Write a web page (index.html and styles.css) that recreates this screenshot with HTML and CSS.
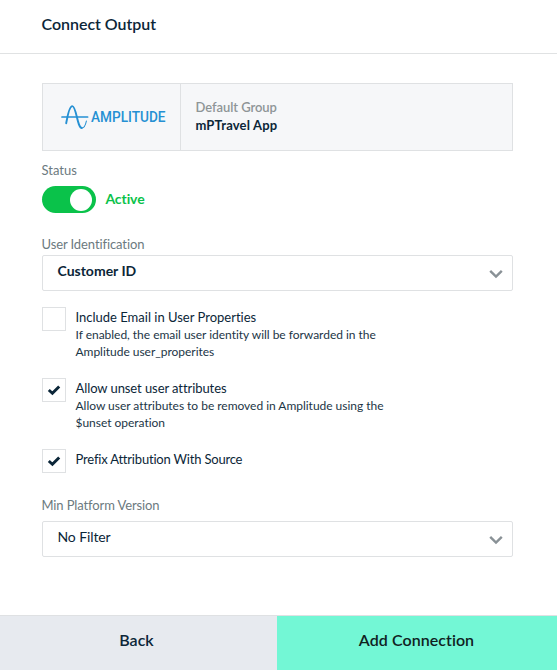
FILE: index.html
```html
<!DOCTYPE html>
<html lang="en">
<head>
<meta charset="utf-8">
<title>Connect Output</title>
<link rel="stylesheet" href="styles.css">
</head>
<body>
<div class="modal">
  <header class="header"><h1 class="title">Connect Output</h1></header>
  <main class="content">
    <section class="card">
      <div class="card-logo">
        <svg width="110" height="26" viewBox="0 0 110 26" role="img" aria-label="Amplitude">
          <g fill="none" stroke="#2590d3" stroke-linecap="round" stroke-linejoin="round">
            <path stroke-width="1.7" d="M1 13H26.6"/>
            <path stroke-width="1.9" d="M5.2 19.2C6.4 13 8 2.1 11.3 2.1C15.4 2.1 16.2 24 20.8 24"/>
            <path stroke-width="1.1" d="M20.8 24C23.6 24 24.6 20.8 25.4 17"/>
          </g>
          <text class="logo-text" x="30" y="17.9" textLength="74.5" lengthAdjust="spacingAndGlyphs">AMPLITUDE</text>
        </svg>
      </div>
      <div class="card-info">
        <div class="card-group">Default Group</div>
        <div class="card-name">mPTravel App</div>
      </div>
    </section>

    <div class="label status-label">Status</div>
    <div class="status">
      <span class="toggle"><span class="knob"></span></span>
      <span class="status-text">Active</span>
    </div>

    <div class="label user-label">User Identification</div>
    <div class="select">
      <span class="value strong">Customer ID</span>
      <svg class="chevron" width="14" height="10" viewBox="0 0 14 10"><path d="M1.2 1.8L7 7.6L12.8 1.8"/></svg>
    </div>

    <div class="options">
      <div class="option">
        <span class="box"></span>
        <div>
          <div class="option-title">Include Email in User Properties</div>
          <div class="option-help">If enabled, the email user identity will be forwarded in the<br>Amplitude user_properites</div>
        </div>
      </div>
      <div class="option">
        <span class="box"><svg width="14" height="12" viewBox="0 0 14 12"><path d="M1.8 6L5.4 9.3L12.2 2.4"/></svg></span>
        <div>
          <div class="option-title snug">Allow unset user attributes</div>
          <div class="option-help">Allow user attributes to be removed in Amplitude using the<br>$unset operation</div>
        </div>
      </div>
      <div class="option">
        <span class="box"><svg width="14" height="12" viewBox="0 0 14 12"><path d="M1.8 6L5.4 9.3L12.2 2.4"/></svg></span>
        <div class="option-title tight">Prefix Attribution With Source</div>
      </div>
    </div>

    <div class="label platform-label">Min Platform Version</div>
    <div class="select">
      <span class="value">No Filter</span>
      <svg class="chevron" width="14" height="10" viewBox="0 0 14 10"><path d="M1.2 1.8L7 7.6L12.8 1.8"/></svg>
    </div>
  </main>
  <footer class="footer">
    <div class="button back">Back</div>
    <div class="button add">Add Connection</div>
  </footer>
</div>
</body>
</html>
```
FILE: styles.css
```css
* { box-sizing: border-box; }
body {
  margin: 0;
  background: #fff;
  color: #0b2638;
  font: 400 13px/18px Lato, "Liberation Sans", sans-serif;
  font-variant-ligatures: none;
}
.modal { display: flex; flex-direction: column; width: 557px; height: 670px; }
.header { height: 54px; padding: 13px 41.5px 0; border-bottom: 1px solid #e0e2e3; }
.title { margin: 0; font-size: 16px; line-height: 22px; font-weight: 600; letter-spacing: -.03px; }
.content { flex: 1; padding: 29px 44px 0 42px; }

.card { display: flex; height: 68px; border: 1px solid #dfe1e3; background: #f6f7f9; }
.card-logo { width: 138px; padding: 20px 0 0 18px; border-right: 1px solid #dfe1e3; }
.card-logo svg { display: block; }
.logo-text { font: 500 14.5px Roboto, sans-serif; fill: #2590d3; }
.card-info { padding: 14px 0 0 14.4px; }
.card-group { color: #8e9597; font-weight: 600; letter-spacing: -.05px; }
.card-name { font-weight: 700; letter-spacing: .18px; }

.label { color: #6c7a80; margin-left: -.5px; }
.status-label { margin-top: 10px; }
.status { display: flex; align-items: center; height: 27px; margin-top: 7px; }
.toggle { display: flex; justify-content: flex-end; width: 54px; height: 27px; padding: 2.5px 4px; border-radius: 14px; background: #0ac24a; }
.knob { width: 22px; height: 22px; border-radius: 50%; background: #fff; }
.status-text { margin: -2px 0 0 9.4px; color: #0ac24a; font-size: 14px; font-weight: 700; letter-spacing: -.08px; }

.user-label { margin-top: 22px; letter-spacing: -.1px; }
.select { display: flex; align-items: center; justify-content: space-between; height: 36px; margin-top: 2px; padding: 0 9.5px 0 14.5px; border: 1px solid #dfe1e3; border-radius: 2px; }
.value { font-size: 14px; margin-top: -5px; letter-spacing: -.1px; }
.strong { font-weight: 700; letter-spacing: 0; }
.chevron { margin-top: 2px; fill: none; stroke: #899196; stroke-width: 2.4; }

.options { display: grid; row-gap: 18px; margin-top: 16px; }
.option { display: flex; }
.box { display: flex; align-items: center; justify-content: center; width: 24px; height: 24px; margin-right: 9.5px; border: 1px solid #dfe1e3; }
.box svg { fill: none; stroke: #0b2638; stroke-width: 2.9; }
.option-title { line-height: 18px; margin-top: 1px; }
.snug { letter-spacing: -.08px; }
.tight { letter-spacing: -.19px; }
.option-help { font-size: 12px; line-height: 17px; height: 34px; letter-spacing: -.025px; color: #1c3546; }

.platform-label { margin-top: 23px; letter-spacing: -.12px; }
.platform-label + .select { margin-top: 7px; }

.footer { display: flex; height: 55px; border-top: 1px solid #dfe1e3; }
.button { padding-top: 13px; text-align: center; font-size: 16px; line-height: 22px; font-weight: 600; }
.back { width: 277px; padding-right: 4px; background: #e7eaef; }
.add { flex: 1; padding-right: 1px; color: #10221f; background: #73f7d5; letter-spacing: .06px; }
```
